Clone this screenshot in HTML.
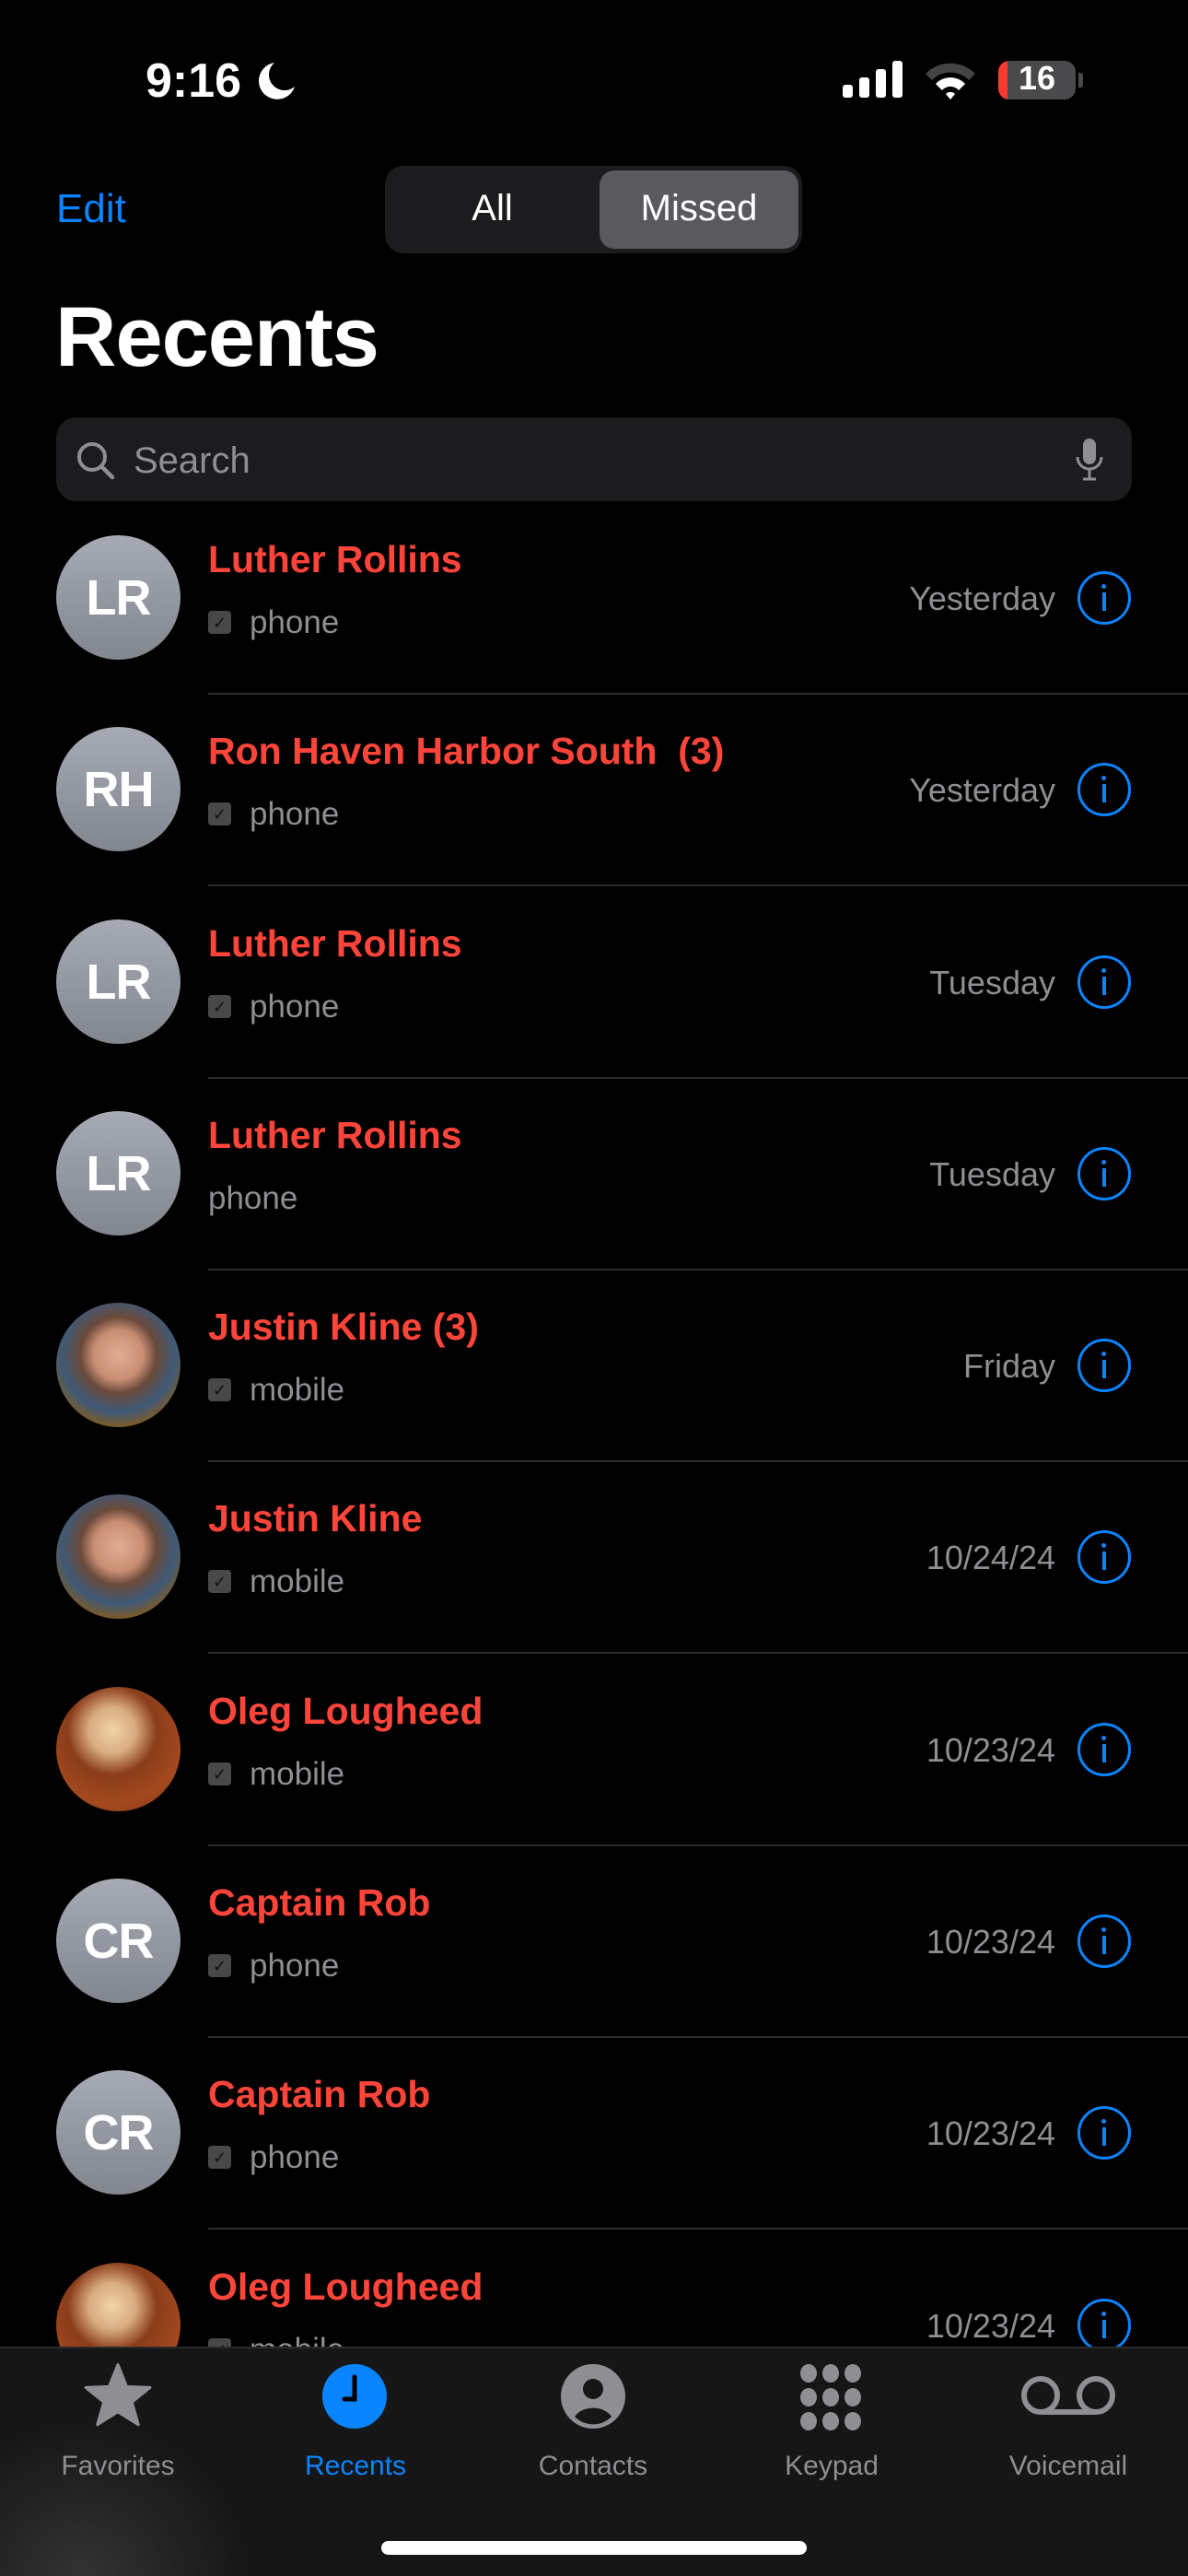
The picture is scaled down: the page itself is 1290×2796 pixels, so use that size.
<!DOCTYPE html><html><head><meta charset="utf-8"><style>
*{margin:0;padding:0;box-sizing:border-box}
body{width:1290px;height:2796px;background:#000;position:relative;overflow:hidden;font-family:"Liberation Sans",sans-serif;color:#fff}
.a{position:absolute}
.av{position:absolute;left:61px;width:135px;height:135px;border-radius:50%;background:linear-gradient(#a6aab4,#82868f);color:#fff;font-size:54px;font-weight:600;display:flex;align-items:center;justify-content:center;letter-spacing:-1px}
.ph1{background:radial-gradient(circle at 50% 42%,#e0ae93 0,#c98e73 26%,#6a4a3a 40%,#3e5a78 60%,#7a5a2a 75%)}
.ph2{background:radial-gradient(circle at 45% 35%,#f2d3a8 0,#d9ab80 22%,#8a3d1a 42%,#a4491e 70%,#6e2b10 100%)}
.nm{position:absolute;left:226px;font-size:41px;font-weight:600;color:#ff453a;line-height:1}
.sb{position:absolute;left:226px;font-size:35px;color:#8e8e93;line-height:1;display:flex;align-items:center}
.ck{width:25px;height:25px;background:#48484a;border-radius:4px;margin-right:20px;color:#111;font-size:18px;display:flex;align-items:center;justify-content:center}
.dt{position:absolute;right:144px;font-size:36px;color:#8e8e93;line-height:1}
.inf{position:absolute;left:1170px;width:58px;height:58px;border:3.5px solid #0a84ff;border-radius:50%}
.inf:before{content:"";position:absolute;left:23px;top:11px;width:5px;height:5px;border-radius:50%;background:#0a84ff}
.inf:after{content:"";position:absolute;left:23.5px;top:20px;width:4px;height:20px;background:#0a84ff}
.sep{position:absolute;left:226px;right:0;height:2px;background:#2c2c2e}
.tl{position:absolute;top:2660px;font-size:30px;color:#8e8e93;width:200px;text-align:center}
</style></head><body>
<div class="a" style="left:158px;top:58px;font-size:52px;font-weight:600">9:16</div>
<svg class="a" style="left:278px;top:64px" width="46" height="46" viewBox="0 0 46 46"><path d="M20 4 A20 20 0 1 0 42 30 A17 17 0 0 1 20 4Z" fill="#fff"/></svg>
<svg class="a" style="left:915px;top:66px" width="68" height="40"><rect x="0" y="26" width="11" height="14" rx="3" fill="#fff"/><rect x="18" y="18" width="11" height="22" rx="3" fill="#fff"/><rect x="36" y="9" width="11" height="31" rx="3" fill="#fff"/><rect x="54" y="0" width="11" height="40" rx="3" fill="#fff"/></svg>
<svg class="a" style="left:1003px;top:66px" width="58" height="42" viewBox="0 0 58 42"><path d="M2 14 A38 38 0 0 1 56 14 L49 21 A28 28 0 0 0 9 21Z" fill="#444"/><path d="M13 25 A22 22 0 0 1 45 25 L38 32 A12 12 0 0 0 20 32Z" fill="#fff"/><path d="M24 36 A7 7 0 0 1 34 36 L29 42Z" fill="#fff"/></svg>
<div class="a" style="left:1084px;top:66px;width:84px;height:42px;border-radius:12px;background:#4a4a4c;overflow:hidden"><div style="width:10px;height:42px;background:#ff3b30"></div></div>
<div class="a" style="left:1084px;top:64px;width:84px;text-align:center;font-size:36px;font-weight:700">16</div>
<div class="a" style="left:1171px;top:79px;width:5px;height:16px;border-radius:0 3px 3px 0;background:#4a4a4c"></div>

<div class="a" style="left:61px;top:202px;font-size:44px;color:#0a84ff">Edit</div>
<div class="a" style="left:418px;top:180px;width:453px;height:95px;border-radius:20px;background:#1c1c1e"></div>
<div class="a" style="left:651px;top:185px;width:216px;height:85px;border-radius:16px;background:#5a5a5e"></div>
<div class="a" style="left:418px;top:204px;width:233px;text-align:center;font-size:40px">All</div>
<div class="a" style="left:651px;top:204px;width:216px;text-align:center;font-size:40px">Missed</div>
<div class="a" style="left:60px;top:314px;font-size:92px;font-weight:700;letter-spacing:-1px">Recents</div>

<div class="a" style="left:61px;top:453px;width:1168px;height:91px;border-radius:22px;background:#1c1c1e"></div>
<svg class="a" style="left:82px;top:478px" width="44" height="44"><circle cx="18" cy="18" r="14" stroke="#8e8e93" stroke-width="4" fill="none"/><path d="M28 28 L40 40" stroke="#8e8e93" stroke-width="4.5" stroke-linecap="round"/></svg>
<div class="a" style="left:145px;top:478px;font-size:40px;color:#8e8e93">Search</div>
<svg class="a" style="left:1166px;top:474px" width="36" height="52"><rect x="10" y="2" width="14" height="28" rx="7" fill="#8e8e93"/><path d="M4 22 A13 13 0 0 0 30 22 M17 35 V46 M10 46 H24" stroke="#8e8e93" stroke-width="3" fill="none"/></svg>

<div class="av" style="top:581px">LR</div><div class="nm" style="top:587px">Luther Rollins</div><div class="sb" style="top:658px"><span class="ck">✓</span>phone</div><div class="dt" style="top:632px">Yesterday</div><div class="inf" style="top:620px"></div><div class="sep" style="top:752px"></div>
<div class="av" style="top:789px">RH</div><div class="nm" style="top:795px">Ron Haven Harbor South&nbsp; (3)</div><div class="sb" style="top:866px"><span class="ck">✓</span>phone</div><div class="dt" style="top:840px">Yesterday</div><div class="inf" style="top:828px"></div><div class="sep" style="top:960px"></div>
<div class="av" style="top:998px">LR</div><div class="nm" style="top:1004px">Luther Rollins</div><div class="sb" style="top:1075px"><span class="ck">✓</span>phone</div><div class="dt" style="top:1049px">Tuesday</div><div class="inf" style="top:1037px"></div><div class="sep" style="top:1169px"></div>
<div class="av" style="top:1206px">LR</div><div class="nm" style="top:1212px">Luther Rollins</div><div class="sb" style="top:1283px">phone</div><div class="dt" style="top:1257px">Tuesday</div><div class="inf" style="top:1245px"></div><div class="sep" style="top:1377px"></div>
<div class="av ph1" style="top:1414px"></div><div class="nm" style="top:1420px">Justin Kline (3)</div><div class="sb" style="top:1491px"><span class="ck">✓</span>mobile</div><div class="dt" style="top:1465px">Friday</div><div class="inf" style="top:1453px"></div><div class="sep" style="top:1585px"></div>
<div class="av ph1" style="top:1622px"></div><div class="nm" style="top:1628px">Justin Kline</div><div class="sb" style="top:1699px"><span class="ck">✓</span>mobile</div><div class="dt" style="top:1673px">10/24/24</div><div class="inf" style="top:1661px"></div><div class="sep" style="top:1793px"></div>
<div class="av ph2" style="top:1831px"></div><div class="nm" style="top:1837px">Oleg Lougheed</div><div class="sb" style="top:1908px"><span class="ck">✓</span>mobile</div><div class="dt" style="top:1882px">10/23/24</div><div class="inf" style="top:1870px"></div><div class="sep" style="top:2002px"></div>
<div class="av" style="top:2039px">CR</div><div class="nm" style="top:2045px">Captain Rob</div><div class="sb" style="top:2116px"><span class="ck">✓</span>phone</div><div class="dt" style="top:2090px">10/23/24</div><div class="inf" style="top:2078px"></div><div class="sep" style="top:2210px"></div>
<div class="av" style="top:2247px">CR</div><div class="nm" style="top:2253px">Captain Rob</div><div class="sb" style="top:2324px"><span class="ck">✓</span>phone</div><div class="dt" style="top:2298px">10/23/24</div><div class="inf" style="top:2286px"></div><div class="sep" style="top:2418px"></div>
<div class="av ph2" style="top:2456px"></div><div class="nm" style="top:2462px">Oleg Lougheed</div><div class="sb" style="top:2533px"><span class="ck">✓</span>mobile</div><div class="dt" style="top:2507px">10/23/24</div><div class="inf" style="top:2495px"></div>

<div class="a" style="left:0;top:2547px;width:1290px;height:249px;background:#161616;border-top:2px solid #2a2a2a"></div>
<div class="a" style="left:0;top:2600px;width:300px;height:196px;background:radial-gradient(ellipse at 30% 100%,#333 0,rgba(40,40,40,0) 60%)"></div>
<svg class="a" style="left:90px;top:2562px" width="76" height="76" viewBox="0 0 24 24"><path d="M12 1.5 L15 9 L23 9.3 L16.8 14.3 L19 22 L12 17.6 L5 22 L7.2 14.3 L1 9.3 L9 9Z" fill="#8e8e93" stroke="#8e8e93" stroke-linejoin="round" stroke-width="1"/></svg>
<svg class="a" style="left:350px;top:2566px" width="70" height="70"><circle cx="35" cy="35" r="35" fill="#0a84ff"/><path d="M35 14 V38 H24" stroke="#000" stroke-width="5" fill="none" stroke-linecap="round"/></svg>
<svg class="a" style="left:609px;top:2566px" width="70" height="70"><circle cx="35" cy="35" r="35" fill="#8e8e93"/><circle cx="35" cy="27" r="11" fill="#161616"/><path d="M15 57 A22 16 0 0 1 55 57 A28 28 0 0 1 15 57Z" fill="#161616"/></svg>
<svg class="a" style="left:866px;top:2566px" width="72" height="72"><g fill="#8e8e93"><ellipse cx="12" cy="10" rx="9" ry="10"/><ellipse cx="36" cy="10" rx="9" ry="10"/><ellipse cx="60" cy="10" rx="9" ry="10"/><ellipse cx="12" cy="36" rx="9" ry="10"/><ellipse cx="36" cy="36" rx="9" ry="10"/><ellipse cx="60" cy="36" rx="9" ry="10"/><ellipse cx="12" cy="62" rx="9" ry="10"/><ellipse cx="36" cy="62" rx="9" ry="10"/><ellipse cx="60" cy="62" rx="9" ry="10"/></g></svg>
<svg class="a" style="left:1108px;top:2578px" width="104" height="50"><circle cx="22" cy="22" r="18" stroke="#8e8e93" stroke-width="6" fill="none"/><circle cx="82" cy="22" r="18" stroke="#8e8e93" stroke-width="6" fill="none"/><path d="M22 40 H82" stroke="#8e8e93" stroke-width="6"/></svg>
<div class="tl" style="left:28px">Favorites</div>
<div class="tl" style="left:286px;color:#0a84ff">Recents</div>
<div class="tl" style="left:544px">Contacts</div>
<div class="tl" style="left:803px">Keypad</div>
<div class="tl" style="left:1060px">Voicemail</div>
<div class="a" style="left:414px;top:2758px;width:462px;height:15px;border-radius:8px;background:#fff"></div>
</body></html>
